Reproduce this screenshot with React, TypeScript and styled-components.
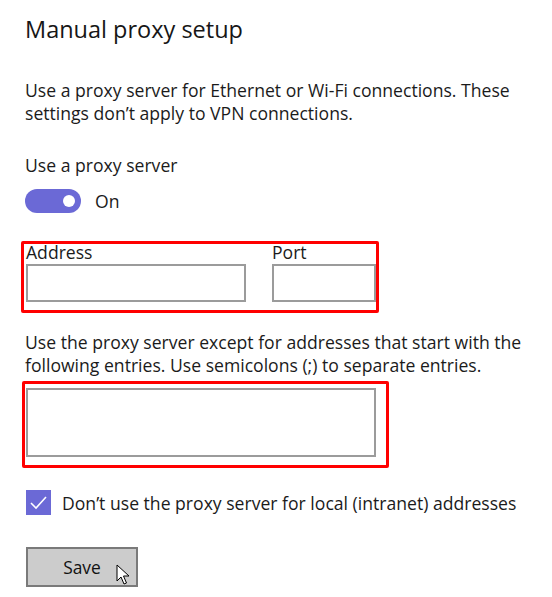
import styled, { createGlobalStyle } from 'styled-components'

const GlobalStyle = createGlobalStyle`
  html, body {
    margin: 0;
    padding: 0;
    background: #ffffff;
  }
  body {
    font-family: 'Open Sans', 'Noto Sans', sans-serif;
    color: #1b1b1b;
  }
`

const Page = styled.div`
  display: flex;
  flex-direction: column;
  align-items: flex-start;
  padding: 14px 0 0 25px;
  width: 552px;
  height: 597px;
  box-sizing: border-box;
  overflow: hidden;
`

const Title = styled.h1`
  margin: 0;
  font-size: 23.5px;
  line-height: 30px;
  font-weight: 400;
  color: #161616;
`

const Text = styled.p<{ $top: number }>`
  margin: ${p => p.$top}px 0 0 0;
  width: 505px;
  font-size: 17.6px;
  line-height: 23px;
`

const ToggleRow = styled.div`
  display: flex;
  align-items: center;
  gap: 14px;
  margin-top: 12px;
  height: 24px;
  font-size: 17.6px;
`

const Track = styled.span`
  position: relative;
  width: 56px;
  height: 24px;
  border-radius: 12px;
  background: #6b69d6;
  &::after {
    content: '';
    position: absolute;
    right: 6px;
    top: 6px;
    width: 12px;
    height: 12px;
    border-radius: 50%;
    background: #fff;
  }
`

const Highlight = styled.div<{ $left: number; $pad: string }>`
  margin-left: ${p => p.$left}px;
  border: 3px solid #ff0000;
  border-radius: 2px;
  padding: ${p => p.$pad};
`

const FieldsRow = styled.div`
  display: flex;
  gap: 26px;
`

const Field = styled.label`
  display: flex;
  flex-direction: column;
  gap: 4px;
  font-size: 17.6px;
  line-height: 16px;
`

const Input = styled.div<{ $w: number; $h: number }>`
  width: ${p => p.$w}px;
  height: ${p => p.$h}px;
  box-sizing: border-box;
  border: 2px solid #9b9b9b;
  background: #fff;
`

const CheckRow = styled.div`
  display: flex;
  align-items: center;
  gap: 11px;
  margin: 22px 0 0 1px;
  height: 25px;
  font-size: 17.6px;
`

const Box = styled.span`
  display: flex;
  width: 25px;
  height: 25px;
  background: #6b69d6;
`

const SaveButton = styled.button`
  position: relative;
  margin: 32px 0 0 1px;
  width: 112px;
  height: 40px;
  box-sizing: border-box;
  border: 2px solid #7a7a7a;
  background: #cccccc;
  font-family: inherit;
  font-size: 17.4px;
  color: #111;
  padding: 0;
`

const Cursor = styled.svg`
  position: absolute;
  left: 88px;
  top: 15px;
`

export default function App () {
  return (
    <>
      <GlobalStyle />
      <Page>
        <Title>Manual proxy setup</Title>
        <Text $top={35}>
          Use a proxy server for Ethernet or Wi-Fi connections. These settings don’t apply to VPN connections.
        </Text>
        <Text $top={29}>Use a proxy server</Text>
        <ToggleRow>
          <Track />
          <span>On</span>
        </ToggleRow>
        <Highlight $left={-4} $pad='0 0 8px 2px' style={{ marginTop: 28 }}>
          <FieldsRow>
            <Field>
              Address
              <Input $w={220} $h={38} />
            </Field>
            <Field>
              Port
              <Input $w={104} $h={38} />
            </Field>
          </FieldsRow>
        </Highlight>
        <Text $top={18}>
          Use the proxy server except for addresses that start with the following entries. Use semicolons (;) to separate entries.
        </Text>
        <Highlight $left={-3} $pad='4px 10px 8px 1px' style={{ marginTop: 4 }}>
          <Input $w={350} $h={69} />
        </Highlight>
        <CheckRow>
          <Box>
            <svg width='25' height='25' viewBox='0 0 25 25'>
              <path d='M5 13 L10 18 L20 7' fill='none' stroke='#fff' strokeWidth='1.6' />
            </svg>
          </Box>
          <span>Don’t use the proxy server for local (intranet) addresses</span>
        </CheckRow>
        <SaveButton>
          Save
          <Cursor width='17' height='22' viewBox='0 0 17 22'>
            <path d='M1 1 L1 17 L5 13 L8 20 L10.5 19 L7.5 12 L13 12 Z' fill='#fff' stroke='#000' strokeWidth='1' strokeLinejoin='round' />
          </Cursor>
        </SaveButton>
      </Page>
    </>
  )
}
